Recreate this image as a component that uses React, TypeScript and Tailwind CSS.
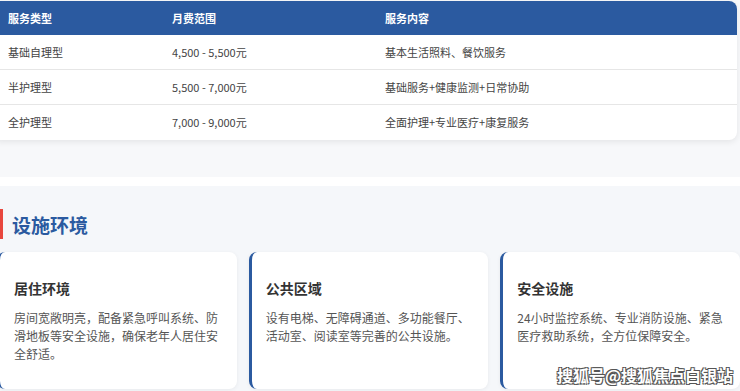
import React from "react";

const rows = [
  { type: "基础自理型", price: "4,500 - 5,500元", content: "基本生活照料、餐饮服务" },
  { type: "半护理型", price: "5,500 - 7,000元", content: "基础服务+健康监测+日常协助" },
  { type: "全护理型", price: "7,000 - 9,000元", content: "全面护理+专业医疗+康复服务" },
];

const facilities = [
  {
    title: "居住环境",
    text: "房间宽敞明亮，配备紧急呼叫系统、防滑地板等安全设施，确保老年人居住安全舒适。",
  },
  {
    title: "公共区域",
    text: "设有电梯、无障碍通道、多功能餐厅、活动室、阅读室等完善的公共设施。",
  },
  {
    title: "安全设施",
    text: "24小时监控系统、专业消防设施、紧急医疗救助系统，全方位保障安全。",
  },
];

export default function App() {
  return (
    <div
      className="relative w-[740px] h-[391px] overflow-hidden bg-white"
      style={{ fontFamily: '"Noto Sans CJK SC", "Noto Sans", sans-serif' }}
    >
      {/* Price table */}
      <section className="bg-[#f7f8fa] pt-px pb-[37px]">
        <div className="ml-[-7px] w-[744px] rounded-lg overflow-hidden bg-white shadow-[0_2px_6px_rgba(0,0,0,0.08)]">
          <div className="flex h-[34px] items-center bg-[#2b5aa0] text-[11px] font-bold text-white">
            <div className="w-[164px] pl-[15px]">服务类型</div>
            <div className="w-[213px] pl-[15px]">月费范围</div>
            <div className="flex-1 pl-[15px]">服务内容</div>
          </div>
          {rows.map((row, i) => (
            <div
              key={row.type}
              className={`flex h-[35px] items-center text-[11px] text-[#444] ${
                i < rows.length - 1 ? "border-b border-[#e6e6e6]" : ""
              }`}
            >
              <div className="w-[164px] pl-[15px]">{row.type}</div>
              <div className="w-[213px] pl-[15px]">{row.price}</div>
              <div className="flex-1 pl-[15px]">{row.content}</div>
            </div>
          ))}
        </div>
      </section>

      {/* Facilities */}
      <section className="mt-[9px] bg-[#f5f7fa] pt-[23px] h-[300px]">
        <div className="flex h-[30px] items-center border-l-[3px] border-[#e8473e] pl-[9px]">
          <h2 className="text-[19px] font-bold text-[#2b5aa0] leading-none">设施环境</h2>
        </div>
        <div className="mt-[13px] ml-[-3px] w-[743px] grid grid-cols-3 gap-[12px]">
          {facilities.map((f) => (
            <div
              key={f.title}
              className="h-[137px] rounded-lg bg-white border-l-[3px] border-[#2b5aa0] pl-[14px] pr-[12px] pt-[25px] shadow-[0_1px_4px_rgba(0,0,0,0.06)]"
            >
              <h3 className="text-[14px] font-bold text-[#333] leading-[22px]">{f.title}</h3>
              <p className="mt-[10px] text-[12px] leading-[18px] text-[#555]">{f.text}</p>
            </div>
          ))}
        </div>
      </section>

      {/* Watermark */}
      <div
        className="absolute left-[557px] top-[363px] text-[16px] font-bold text-white"
        style={{
          textShadow:
            "1px 1px 0 #555, -1px -1px 0 #555, 1px -1px 0 #555, -1px 1px 0 #555",
        }}
      >
        搜狐号@搜狐焦点白银站
      </div>
    </div>
  );
}
